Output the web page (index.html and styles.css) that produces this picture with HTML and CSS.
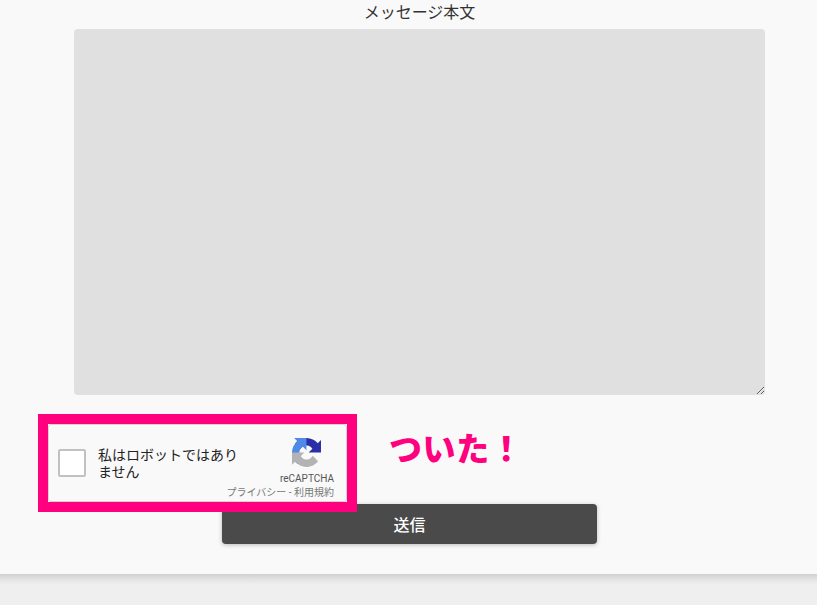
FILE: index.html
```html
<!DOCTYPE html>
<html>
<head>
    <meta charset="UTF-8">
    <title>お問い合わせ</title>
    <link rel="stylesheet" href="styles.css">
</head>
<body>
    <form class="card">
        <div class="field">
            <label class="label" for="message">メッセージ本文</label>
            <textarea class="message" id="message"></textarea>
        </div>
        <div class="captchaRow">
            <div class="frame">
                <div class="captcha">
                    <span class="check"></span>
                    <span class="robot">私はロボットではありません</span>
                    <div class="brand">
                        <svg class="logo" viewBox="0 0 64 64">
                            <path fill="#2a2fa8" d="M64 31.955l-.033-1.37V4.687l-7.16 7.16C50.948 4.674 42.033.093 32.05.093c-10.4 0-19.622 4.96-25.458 12.64l11.736 11.86a15.55 15.55 0 0 1 4.754-5.334c2.05-1.6 4.952-2.906 8.968-2.906.485 0 .86.057 1.135.163 4.976.393 9.288 3.14 11.828 7.124l-8.307 8.307L64 31.953"/>
                            <path fill="#4f8ae8" d="M31.862 0l-1.37.033H4.594l7.16 7.16C4.58 13.052 0 21.967 0 31.95c0 10.4 4.96 19.622 12.64 25.458l11.86-11.736a15.55 15.55 0 0 1-5.334-4.754c-1.6-2.05-2.906-4.952-2.906-8.968 0-.485.057-.86.163-1.135.393-4.976 3.14-9.288 7.124-11.828l8.307 8.307L31.86 0"/>
                            <path fill="#b3b3b3" d="M.001 31.955l.033 1.37v25.9l7.16-7.16c5.86 7.173 14.775 11.754 24.76 11.754 10.4 0 19.622-4.96 25.458-12.64l-11.736-11.86a15.55 15.55 0 0 1-4.754 5.334c-2.05 1.6-4.952 2.906-8.968 2.906-.485 0-.86-.057-1.135-.163-4.976-.393-9.288-3.14-11.828-7.124l8.307-8.307c-10.522.001-22.4.001-29.3-.01"/>
                        </svg>
                        <span class="brandName">reCAPTCHA</span>
                        <span class="terms">プライバシー - 利用規約</span>
                    </div>
                </div>
            </div>
            <p class="note">ついた！</p>
        </div>
        <button class="send" type="button">送信</button>
    </form>
    <div class="footer"></div>
</body>
</html>
```

FILE: styles.css
```css
*{
    padding: 0;
    margin: 0;
    box-sizing: border-box;
}
body{
    background: #efefef;
    font-family: "Roboto", "Noto Sans CJK JP", sans-serif;
    color: #333;
}
.card{
    background: #f9f9f9;
    height: 574px;
}
.footer{
    height: 31px;
    background: linear-gradient(#cfcfcf, #e2e2e2 5px, #ececec 9px, #efefef 11px);
}
.field{
    padding: 0 52px 0 74px;
    display: flex;
    flex-direction: column;
    align-items: center;
}
.label{
    font-size: 16px;
    line-height: 25px;
    height: 29px;
}
.message{
    display: block;
    width: 100%;
    height: 366px;
    background: #e0e0e0;
    border: none;
    border-radius: 4px;
}
.captchaRow{
    display: flex;
    align-items: flex-start;
    gap: 32px;
    padding: 19px 0 0 38px;
}
.frame{
    position: relative;
    z-index: 1;
    border: 10px solid #ff007f;
}
.captcha{
    width: 299px;
    height: 78px;
    display: flex;
    align-items: center;
    background: #f9f9f9;
    border: 1px solid #d3d3d3;
    border-radius: 3px;
    padding-left: 9px;
    position: relative;
}
.check{
    width: 28px;
    height: 28px;
    flex: none;
    background: #fff;
    border: 2px solid #c1c1c1;
    border-radius: 2px;
}
.robot{
    width: 150px;
    margin-left: 12px;
    font-size: 14px;
    line-height: 17px;
    color: #222;
    padding-top: 1px;
}
.brand{
    position: absolute;
    right: 12px;
    top: 13px;
    display: flex;
    flex-direction: column;
    align-items: flex-end;
}
.logo{
    width: 29px;
    height: 29px;
    margin-right: 13px;
}
.brandName{
    font-family: "Roboto", sans-serif;
    font-size: 10px;
    line-height: 12px;
    margin-top: 6px;
    color: #555;
}
.terms{
    font-size: 10px;
    line-height: 12px;
    margin-top: 2px;
    color: #777;
    white-space: nowrap;
}
.note{
    font-size: 33px;
    font-weight: 900;
    line-height: 40px;
    letter-spacing: .6px;
    color: #ff007f;
    margin-top: 16px;
}
.send{
    display: block;
    width: 375px;
    height: 40px;
    margin: -8px 0 0 222px;
    background: #4a4a4a;
    color: #fff;
    border: none;
    border-radius: 4px;
    font-family: inherit;
    font-size: 16px;
    font-weight: 500;
    box-shadow: 0 1px 4px rgba(0,0,0,.25);
}
```
